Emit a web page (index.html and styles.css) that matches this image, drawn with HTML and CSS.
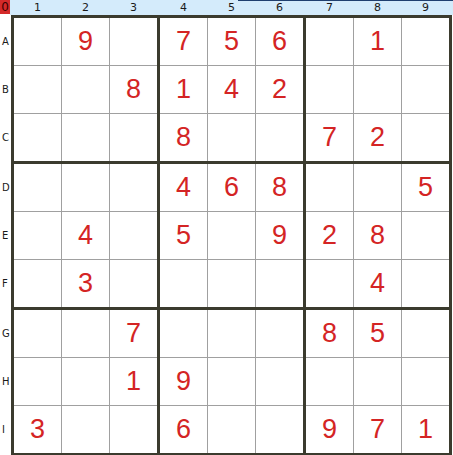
FILE: index.html
```html
<!DOCTYPE html>
<html>
<head>
<meta charset="utf-8">
<link rel="stylesheet" href="styles.css">
</head>
<body>
<div class="page">
  <div class="top">
    <div class="corner">0</div>
    <div class="colbar">
      <span class="lbl">1</span><span class="lbl">2</span><span class="lbl">3</span>
      <span class="lbl">4</span><span class="lbl">5</span><span class="lbl">6</span>
      <span class="lbl">7</span><span class="lbl">8</span><span class="lbl">9</span>
    </div>
  </div>
  <div class="main">
    <div class="rowbar">
      <span class="rl">A</span><span class="rl">B</span><span class="rl">C</span>
      <span class="rl">D</span><span class="rl">E</span><span class="rl">F</span>
      <span class="rl">G</span><span class="rl">H</span><span class="rl">I</span>
    </div>
    <div class="board">
      <div class="box">
        <div class="cell"></div><div class="cell">9</div><div class="cell"></div>
        <div class="cell"></div><div class="cell"></div><div class="cell">8</div>
        <div class="cell"></div><div class="cell"></div><div class="cell"></div>
      </div>
      <div class="box">
        <div class="cell">7</div><div class="cell">5</div><div class="cell">6</div>
        <div class="cell">1</div><div class="cell">4</div><div class="cell">2</div>
        <div class="cell">8</div><div class="cell"></div><div class="cell"></div>
      </div>
      <div class="box">
        <div class="cell"></div><div class="cell">1</div><div class="cell"></div>
        <div class="cell"></div><div class="cell"></div><div class="cell"></div>
        <div class="cell">7</div><div class="cell">2</div><div class="cell"></div>
      </div>
      <div class="box">
        <div class="cell"></div><div class="cell"></div><div class="cell"></div>
        <div class="cell"></div><div class="cell">4</div><div class="cell"></div>
        <div class="cell"></div><div class="cell">3</div><div class="cell"></div>
      </div>
      <div class="box">
        <div class="cell">4</div><div class="cell">6</div><div class="cell">8</div>
        <div class="cell">5</div><div class="cell"></div><div class="cell">9</div>
        <div class="cell"></div><div class="cell"></div><div class="cell"></div>
      </div>
      <div class="box">
        <div class="cell"></div><div class="cell"></div><div class="cell">5</div>
        <div class="cell">2</div><div class="cell">8</div><div class="cell"></div>
        <div class="cell"></div><div class="cell">4</div><div class="cell"></div>
      </div>
      <div class="box">
        <div class="cell"></div><div class="cell"></div><div class="cell">7</div>
        <div class="cell"></div><div class="cell"></div><div class="cell">1</div>
        <div class="cell">3</div><div class="cell"></div><div class="cell"></div>
      </div>
      <div class="box">
        <div class="cell"></div><div class="cell"></div><div class="cell"></div>
        <div class="cell">9</div><div class="cell"></div><div class="cell"></div>
        <div class="cell">6</div><div class="cell"></div><div class="cell"></div>
      </div>
      <div class="box">
        <div class="cell">8</div><div class="cell">5</div><div class="cell"></div>
        <div class="cell"></div><div class="cell"></div><div class="cell"></div>
        <div class="cell">9</div><div class="cell">7</div><div class="cell">1</div>
      </div>
    </div>
  </div>
</div>
</body>
</html>
```

FILE: styles.css
```css
html, body {
  margin: 0;
  padding: 0;
  background: #ffffff;
}

.page {
  width: 453px;
  height: 455px;
  overflow: hidden;
  font-family: "DejaVu Sans", Verdana, sans-serif;
}

.top {
  display: flex;
  height: 15px;
  position: relative;
}

.top::before {
  content: "";
  position: absolute;
  left: 238px;
  right: 0;
  top: 0;
  height: 1px;
  background: #1f3f6f;
}

.corner {
  width: 10px;
  height: 14px;
  background: #d42a2a;
  color: #3a0000;
  font-size: 12px;
  line-height: 14px;
  text-align: center;
  overflow: hidden;
}

.colbar {
  flex: 1;
  display: flex;
  background: #d4ebfb;
  padding-left: 4px;
  color: #1a1a1a;
  font-size: 11px;
  line-height: 15px;
}

.lbl {
  width: 47px;
  margin-right: 1px;
  text-align: center;
}

.lbl:nth-child(3n) {
  margin-right: 3px;
}

.main {
  display: flex;
}

.rowbar {
  width: 11px;
  display: flex;
  flex-direction: column;
  padding-top: 3px;
  font-size: 10px;
  color: #1a1a1a;
}

.rl {
  height: 47px;
  margin-bottom: 1px;
  line-height: 47px;
  padding-left: 2px;
}

.rl:nth-child(3n) {
  margin-bottom: 3px;
}

.board {
  display: grid;
  grid-template-columns: repeat(3, 143px);
  grid-template-rows: repeat(3, 143px);
  gap: 3px;
  padding: 3px;
  background: #3b3b2e;
}

.box {
  display: grid;
  grid-template-columns: repeat(3, 47px);
  grid-template-rows: repeat(3, 47px);
  gap: 1px;
  background: #a0a0a0;
}

.cell {
  background: #ffffff;
  color: #d42424;
  font-family: "Liberation Sans", Arial, sans-serif;
  font-size: 27px;
  display: flex;
  align-items: center;
  justify-content: center;
}
```
